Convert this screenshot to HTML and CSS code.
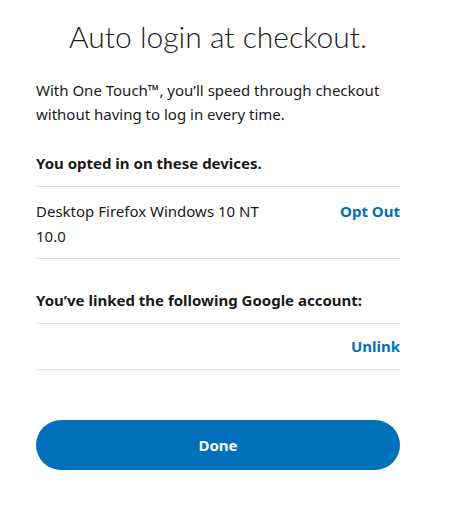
FILE: index.html
```html
<!DOCTYPE html>
<html lang="en">
<head>
<meta charset="utf-8">
<title>Auto login at checkout</title>
<link rel="stylesheet" href="styles.css">
</head>
<body>
<main class="panel">
  <h1 class="title">Auto login at checkout.</h1>
  <p class="intro">With One Touch™, you’ll speed through checkout without having to log in every time.</p>
  <h2 class="section-heading">You opted in on these devices.</h2>
  <ul class="list">
    <li class="row row-device">
      <span class="row-label">Desktop Firefox Windows 10 NT 10.0</span>
      <a class="row-action" href="#">Opt Out</a>
    </li>
  </ul>
  <h2 class="section-heading section-heading-linked">You’ve linked the following Google account:</h2>
  <ul class="list">
    <li class="row row-account">
      <span class="row-label"></span>
      <a class="row-action" href="#">Unlink</a>
    </li>
  </ul>
  <button class="done-button" type="button">Done</button>
</main>
</body>
</html>
```

FILE: styles.css
```css
html, body {
  margin: 0;
  padding: 0;
  background: #ffffff;
}

body {
  font-family: "Noto Sans", "Open Sans", "Liberation Sans", sans-serif;
  color: #1a1a1a;
}

.panel {
  width: 364px;
  margin-left: 36px;
  padding-top: 18px;
  display: flex;
  flex-direction: column;
}

.title {
  margin: 0;
  font-family: "Lato", "Noto Sans", sans-serif;
  font-weight: 300;
  font-size: 30px;
  line-height: 36px;
  text-align: center;
  color: #1a1a1a;
}

.intro {
  margin: 24px 0 0;
  font-size: 15px;
  line-height: 24px;
}

.section-heading {
  margin: 25px 0 0;
  font-size: 15px;
  font-weight: 700;
  line-height: 24px;
  padding-bottom: 11px;
  border-bottom: 1px solid #dddddd;
}

.section-heading-linked {
  margin-top: 29px;
}

.list {
  list-style: none;
  margin: 0;
  padding: 0;
}

.row {
  display: flex;
  justify-content: space-between;
  align-items: flex-start;
  gap: 20px;
  font-size: 15px;
  line-height: 25px;
  border-bottom: 1px solid #dddddd;
}

.row-device {
  padding: 12px 0 9px;
}

.row-device .row-label {
  max-width: 240px;
}

.row-account {
  padding: 10px 0 10px;
}

.row-action {
  color: #0070ba;
  font-weight: 700;
  text-decoration: none;
  white-space: nowrap;
}

.done-button {
  margin-top: 50px;
  height: 50px;
  border: none;
  border-radius: 25px;
  background: #0070ba;
  color: #ffffff;
  font-family: "Noto Sans", "Open Sans", sans-serif;
  font-size: 15px;
  font-weight: 700;
  cursor: pointer;
}
```
